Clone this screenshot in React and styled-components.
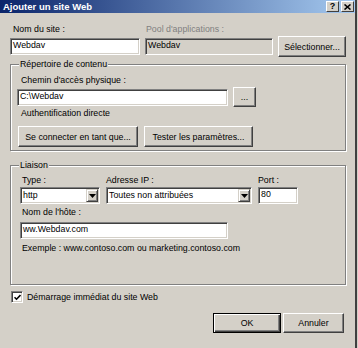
import React from "react";
import styled, { createGlobalStyle } from "styled-components";

const GlobalStyle = createGlobalStyle`
  html, body {
    margin: 0;
    padding: 0;
    background: #d4d0c8;
  }
  body {
    font-family: "Liberation Sans", Arial, sans-serif;
    font-size: 8.8px;
    color: #000;
  }
`;

const Window = styled.div`
  box-sizing: border-box;
  width: 357px;
  height: 348px;
  background: #d4d0c8;
  border-right: 2px solid #404040;
  display: flex;
  flex-direction: column;
`;

const TitleBar = styled.div`
  height: 13px;
  display: flex;
  align-items: center;
  justify-content: space-between;
  padding: 0 1px 0 3px;
  background: linear-gradient(to right, #0a246a, #a6caf0);
`;

const Title = styled.span`
  color: #fff;
  font-weight: bold;
  font-size: 9.5px;
  line-height: 13px;
`;

const TitleButtons = styled.div`
  display: flex;
  gap: 2px;
`;

const TitleButton = styled.div`
  box-sizing: border-box;
  width: 13px;
  height: 11px;
  display: flex;
  align-items: center;
  justify-content: center;
  background: #d4d0c8;
  border: 1px solid;
  border-color: #fff #404040 #404040 #fff;
  font-weight: bold;
  font-size: 9px;
  line-height: 9px;
`;

const Body = styled.div`
  flex: 1;
  display: flex;
  flex-direction: column;
  padding: 11px 10px 0 10px;
`;

const Label = styled.div`
  height: 11px;
  line-height: 11px;
  padding-left: ${(p) => p.$indent ?? 3}px;
  color: ${(p) => (p.$disabled ? "#808080" : "#000")};
  white-space: nowrap;
`;

const TextBox = styled.div`
  box-sizing: border-box;
  height: 17px;
  width: ${(p) => (p.$width ? `${p.$width}px` : "auto")};
  line-height: 13px;
  padding: 0 2px;
  background: ${(p) => (p.$disabled ? "#d4d0c8" : "#fff")};
  border: 1px solid;
  border-color: #808080 #fff #fff #808080;
  box-shadow: inset 1px 1px 0 #404040, inset -1px -1px 0 #d4d0c8;
  white-space: nowrap;
  overflow: hidden;
`;

const Button = styled.div`
  box-sizing: border-box;
  width: ${(p) => p.$width}px;
  height: ${(p) => p.$height ?? 21}px;
  display: flex;
  align-items: center;
  justify-content: center;
  background: #d4d0c8;
  border: 1px solid;
  border-color: ${(p) => (p.$default ? "#000" : "#fff #404040 #404040 #fff")};
  box-shadow: ${(p) =>
    p.$default
      ? "inset 1px 1px 0 #fff, inset -1px -1px 0 #404040, inset -2px -2px 0 #808080"
      : "inset -1px -1px 0 #808080"};
  white-space: nowrap;
`;

const SiteGrid = styled.div`
  display: grid;
  grid-template-columns: 130px 128px 68px;
  column-gap: 5px;
  row-gap: 1px;
  align-items: center;
`;

const Group = styled.fieldset`
  margin: ${(p) => p.$top}px 0 0 0;
  padding: ${(p) => p.$pad};
  min-width: 0;
  border: 1px solid #808080;
  box-shadow: inset 1px 1px 0 #fff, 1px 1px 0 #fff;
  width: 336px;
  box-sizing: border-box;
`;

const Legend = styled.legend`
  margin-left: ${(p) => p.$offset}px;
  padding: 0 1px;
  line-height: 11px;
  background: #d4d0c8;
  position: relative;
`;

const PathRow = styled.div`
  display: flex;
  align-items: center;
  gap: 5px;
  margin-top: 1px;
`;

const Note = styled.div`
  line-height: 11px;
  padding-left: ${(p) => p.$indent ?? 5}px;
  margin-top: ${(p) => p.$top}px;
  white-space: nowrap;
`;

const ButtonRow = styled.div`
  display: flex;
  gap: 6px;
  margin-top: ${(p) => p.$top ?? 0}px;
  padding-left: 1px;
`;

const BindingGrid = styled.div`
  display: grid;
  grid-template-columns: 80px 146px 40px;
  column-gap: 6px;
  row-gap: 1px;
`;

const Select = styled(TextBox)`
  display: flex;
  align-items: center;
  justify-content: space-between;
  padding: 0 2px 0 2px;
`;

const DropButton = styled.div`
  box-sizing: border-box;
  width: 12px;
  height: 13px;
  display: flex;
  align-items: center;
  justify-content: center;
  background: #d4d0c8;
  border: 1px solid;
  border-color: #d4d0c8 #404040 #404040 #d4d0c8;
  box-shadow: inset 1px 1px 0 #fff, inset -1px -1px 0 #808080;
  margin-right: -1px;
`;

const HostBlock = styled.div`
  display: flex;
  flex-direction: column;
  gap: 4px;
  margin-top: 3px;
`;

const CheckRow = styled.div`
  display: flex;
  align-items: center;
  gap: 4px;
  margin-top: 6px;
  padding-left: 1px;
`;

const CheckBox = styled.div`
  box-sizing: border-box;
  width: 12px;
  height: 12px;
  display: flex;
  align-items: center;
  justify-content: center;
  background: #fff;
  border: 1px solid;
  border-color: #808080 #fff #fff #808080;
  box-shadow: inset 1px 1px 0 #404040, inset -1px -1px 0 #d4d0c8;
`;

const Footer = styled.div`
  display: flex;
  justify-content: flex-end;
  gap: 2px;
  margin-top: 10px;
  padding-right: 1px;
`;

const Arrow = () => (
  <svg width="7" height="4" viewBox="0 0 7 4">
    <path d="M0 0h7L3.5 4z" fill="#000" />
  </svg>
);

export default function App() {
  return (
    <>
      <GlobalStyle />
      <Window>
        <TitleBar>
          <Title>Ajouter un site Web</Title>
          <TitleButtons>
            <TitleButton>?</TitleButton>
            <TitleButton>
              <svg width="7" height="6" viewBox="0 0 7 6">
                <path d="M0.5 0.5l6 5M6.5 0.5l-6 5" stroke="#000" strokeWidth="1.6" />
              </svg>
            </TitleButton>
          </TitleButtons>
        </TitleBar>
        <Body>
          <SiteGrid>
            <Label>Nom du site :</Label>
            <Label $indent={1} $disabled>
              Pool d'applications :
            </Label>
            <span />
            <TextBox>Webdav</TextBox>
            <TextBox $disabled>Webdav</TextBox>
            <Button $width={68}>Sélectionner...</Button>
          </SiteGrid>

          <Group $top={2} $pad="5px 6px 3px 6px">
            <Legend $offset={2}>Répertoire de contenu</Legend>
            <Label $indent={4}>Chemin d'accès physique :</Label>
            <PathRow>
              <TextBox $width={211}>C:\Webdav</TextBox>
              <Button $width={23} $height={20}>
                ...
              </Button>
            </PathRow>
            <Note $indent={4} $top={1}>
              Authentification directe
            </Note>
            <ButtonRow $top={7}>
              <Button $width={120}>Se connecter en tant que...</Button>
              <Button $width={109}>Tester les paramètres...</Button>
            </ButtonRow>
          </Group>

          <Group $top={9} $pad="4px 9px 30px 9px">
            <Legend $offset={-1}>Liaison</Legend>
            <BindingGrid>
              <Label $indent={2}>Type :</Label>
              <Label $indent={0}>Adresse IP :</Label>
              <Label $indent={0}>Port :</Label>
              <Select>
                http
                <DropButton>
                  <Arrow />
                </DropButton>
              </Select>
              <Select>
                Toutes non attribuées
                <DropButton>
                  <Arrow />
                </DropButton>
              </Select>
              <TextBox>80</TextBox>
            </BindingGrid>
            <HostBlock>
              <Label $indent={2}>Nom de l'hôte :</Label>
              <TextBox $width={208}>ww.Webdav.com</TextBox>
            </HostBlock>
            <Note $indent={2} $top={4}>
              Exemple : www.contoso.com ou marketing.contoso.com
            </Note>
          </Group>

          <CheckRow>
            <CheckBox>
              <svg width="7" height="7" viewBox="0 0 7 7">
                <path d="M0.5 3.2l2 2 4-4.2" stroke="#000" strokeWidth="1.6" fill="none" />
              </svg>
            </CheckBox>
            <span>Démarrage immédiat du site Web</span>
          </CheckRow>

          <Footer>
            <Button $width={68} $height={20} $default>
              OK
            </Button>
            <Button $width={61} $height={20}>
              Annuler
            </Button>
          </Footer>
        </Body>
      </Window>
    </>
  );
}
